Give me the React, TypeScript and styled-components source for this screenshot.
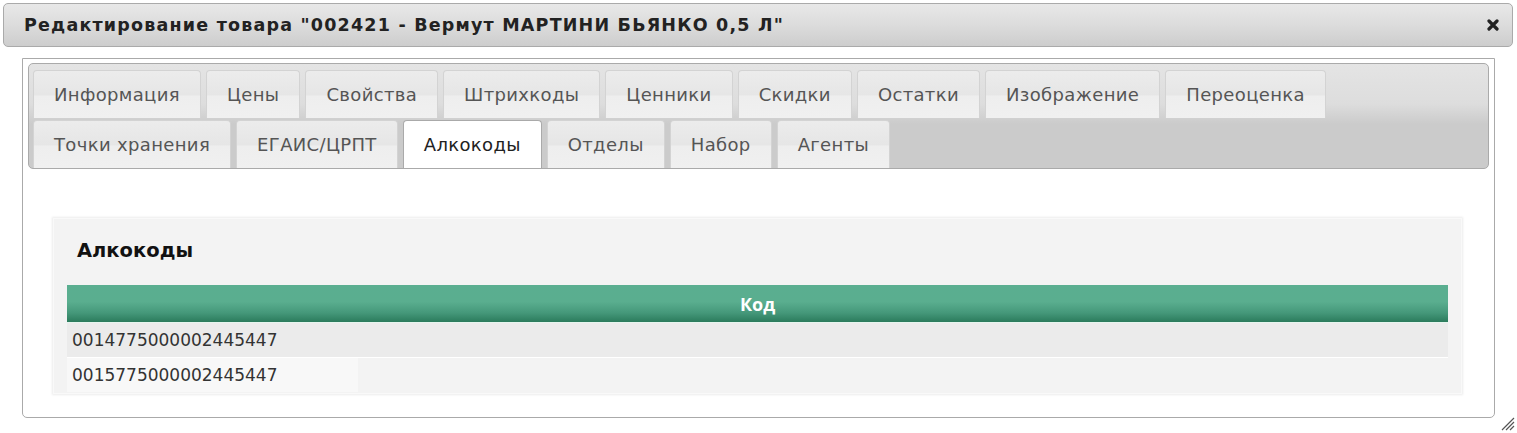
import React from "react";
import styled, { createGlobalStyle } from "styled-components";

const Global = createGlobalStyle`
  html, body { margin: 0; padding: 0; background: #ffffff; }
  body { font-family: "DejaVu Sans", Verdana, sans-serif; }
`;

const Dialog = styled.div`
  width: 1517px;
  height: 433px;
  box-sizing: border-box;
  padding: 3px 4px 0 3px;
  display: flex;
  flex-direction: column;
  position: relative;
`;

const TitleBar = styled.div`
  height: 44px;
  box-sizing: border-box;
  border: 1px solid #aaaaaa;
  border-radius: 5px;
  background: linear-gradient(to bottom, #e8e8e8 0%, #dcdcdc 50%, #cdcdcd 100%);
  display: flex;
  align-items: center;
  justify-content: space-between;
  padding: 0 12px 0 20px;
`;

const Title = styled.div`
  font-weight: bold;
  font-size: 17.5px;
  color: #222222;
  letter-spacing: 1.2px;
`;

const Close = styled.div`
  width: 14px;
  height: 14px;
  display: flex;
  align-items: center;
  justify-content: center;
`;

const Body = styled.div`
  margin: 11px 18px 0 19px;
  height: 360px;
  box-sizing: border-box;
  border: 1px solid #aaaaaa;
  border-radius: 0 0 5px 5px;
  background: #ffffff;
  padding: 4px 5px 0 5px;
  display: flex;
  flex-direction: column;
`;

const TabNav = styled.div`
  border: 1px solid #aaaaaa;
  border-radius: 5px;
  background: linear-gradient(to bottom, #e4e4e4 0px, #dddddd 40px, #cbcbcb 60px, #cbcbcb 100%);
  padding: 6px 4px 0 4px;
  display: flex;
  flex-direction: column;
  gap: 2px;
`;

const TabRow = styled.div`
  display: flex;
  gap: 5px;
`;

const Tab = styled.div<{ $active?: boolean }>`
  height: 48px;
  box-sizing: border-box;
  padding: 0 20px;
  display: flex;
  align-items: center;
  font-size: 18px;
  letter-spacing: 0.35px;
  color: ${(p) => (p.$active ? "#212121" : "#555555")};
  border-radius: 4px 4px 0 0;
  border: 1px solid ${(p) => (p.$active ? "#aaaaaa" : "#d3d3d3")};
  border-bottom: none;
  background: ${(p) =>
    p.$active
      ? "#ffffff"
      : "linear-gradient(to bottom, #ececec 0%, #e6e6e6 50%, #eeeeee 54%, #f0f0f0 100%)"};
  ${(p) => (p.$active ? "margin-bottom: -1px;" : "")}
`;

const Panel = styled.div`
  margin: 49px 27px 0 25px;
  background: #f3f3f3;
  border: 1px solid #f9f9f9;
  box-shadow: 0 0 2px 1px #ececec;
  padding: 0 13px 2px 13px;
  height: 176px;
  box-sizing: border-box;
`;

const PanelTitle = styled.div`
  font-weight: bold;
  font-size: 19.5px;
  color: #111111;
  padding: 20px 0 0 10px;
  height: 66px;
  box-sizing: border-box;
`;

const Table = styled.div`
  display: flex;
  flex-direction: column;
`;

const HeaderRow = styled.div`
  height: 37px;
  background: linear-gradient(to bottom, #5aae90 0%, #5aae8f 45%, #45987a 75%, #2b7b5c 100%);
  display: flex;
  align-items: center;
  justify-content: center;
  color: #ffffff;
  font-weight: bold;
  font-size: 18px;
  font-family: "Open Sans", "DejaVu Sans", sans-serif;
  border-bottom: 1px solid #e6f5ee;
`;

const Row = styled.div<{ $alt?: boolean }>`
  height: 34px;
  display: flex;
  align-items: center;
  background: ${(p) => (p.$alt ? "#f3f3f3" : "#ebebeb")};
  border-bottom: 1px solid ${(p) => (p.$alt ? "#f3f3f3" : "#ffffff")};
`;

const Cell = styled.div<{ $alt?: boolean }>`
  width: 291px;
  height: 100%;
  box-sizing: border-box;
  padding-left: 5px;
  display: flex;
  align-items: center;
  font-size: 17px;
  color: #333333;
  background: ${(p) => (p.$alt ? "#f8f8f8" : "transparent")};
`;

const Resize = styled.div`
  position: absolute;
  right: 2px;
  bottom: 2px;
  width: 16px;
  height: 16px;
`;

const tabs1 = ["Информация", "Цены", "Свойства", "Штрихкоды", "Ценники", "Скидки", "Остатки", "Изображение", "Переоценка"];
const tabs2 = ["Точки хранения", "ЕГАИС/ЦРПТ", "Алкокоды", "Отделы", "Набор", "Агенты"];
const codes = ["0014775000002445447", "0015775000002445447"];

export default function App() {
  return (
    <>
      <Global />
      <Dialog>
        <TitleBar>
          <Title>Редактирование товара "002421 - Вермут МАРТИНИ БЬЯНКО 0,5 Л"</Title>
          <Close>
            <svg width="12" height="12" viewBox="0 0 12 12">
              <path d="M2 2 L10 10 M10 2 L2 10" stroke="#222" strokeWidth="3.2" strokeLinecap="round" />
            </svg>
          </Close>
        </TitleBar>
        <Body>
          <TabNav>
            <TabRow>
              {tabs1.map((t) => (
                <Tab key={t}>{t}</Tab>
              ))}
            </TabRow>
            <TabRow>
              {tabs2.map((t) => (
                <Tab key={t} $active={t === "Алкокоды"}>
                  {t}
                </Tab>
              ))}
            </TabRow>
          </TabNav>
          <Panel>
            <PanelTitle>Алкокоды</PanelTitle>
            <Table>
              <HeaderRow>Код</HeaderRow>
              {codes.map((c, i) => (
                <Row key={c} $alt={i % 2 === 1}>
                  <Cell $alt={i % 2 === 1}>{c}</Cell>
                </Row>
              ))}
            </Table>
          </Panel>
        </Body>
        <Resize>
          <svg width="16" height="16" viewBox="0 0 16 16">
            <path d="M15 3 L3 15 M15 7 L7 15 M15 11 L11 15" stroke="#555" strokeWidth="1.2" />
          </svg>
        </Resize>
      </Dialog>
    </>
  );
}
